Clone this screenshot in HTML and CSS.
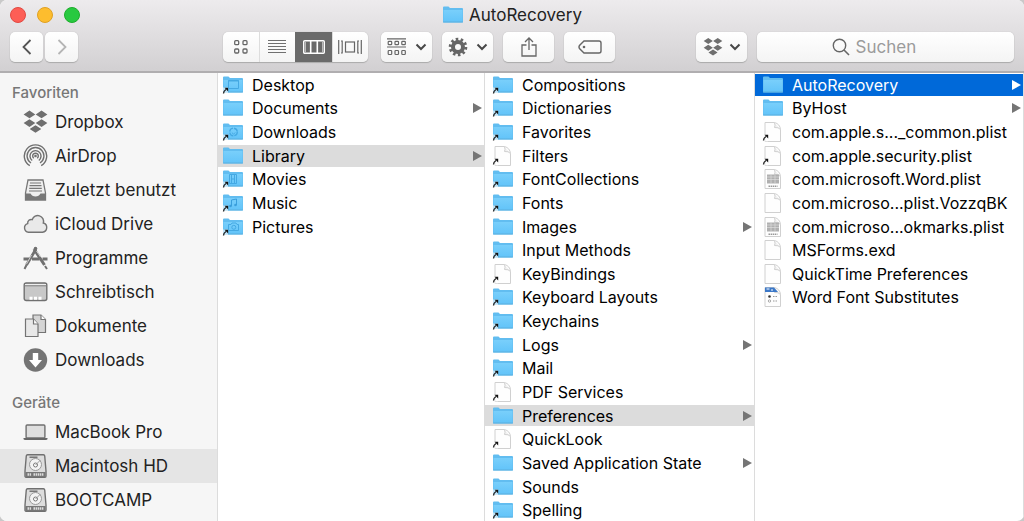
FILE: index.html
```html
<!DOCTYPE html>
<html lang="de">
<head>
<meta charset="utf-8">
<title>AutoRecovery</title>
<link rel="stylesheet" href="styles.css">
</head>
<body>
<svg class="defs" aria-hidden="true">
  <defs>
    <linearGradient id="blue" x1="0" y1="0" x2="0" y2="1"><stop offset="0" stop-color="#79cffb"/><stop offset="1" stop-color="#63c4f9"/></linearGradient>
    <symbol id="folder" viewBox="0 0 22 20"><path d="M1 2.500q0-1 1-1h4.500l1.500 1.500h12q1 0 1 1v12.500q0 1-1 1H2q-1 0-1-1z" fill="#62bdf0"/><path d="M1.500 5h19v11.500h-19z" fill="url(#blue)"/><path d="M1 17h20" stroke="#5cb2e2"/></symbol>
    <symbol id="arrow" viewBox="0 0 22 20"><path d="M0 12.500h6v7H0z" fill="#fff" opacity=".6"/><path d="M1.500 18.500q0-2.500 2.500-4" fill="none" stroke="#222" stroke-width="1.300"/><path d="M2.500 12.800h3.700v3.700z" fill="#111"/></symbol>
    <symbol id="alias" viewBox="0 0 22 20"><use href="#folder"/><use href="#arrow"/></symbol>
    <symbol id="doc" viewBox="0 0 22 20"><path d="M3 .5h9.500q5.500 1.500 6 7v12H3z" fill="#fefefe" stroke="#d0d0d0"/><path d="M12.500.5q1 3 0 5 4-.5 6 2" fill="#f2f2f2" stroke="#d0d0d0"/></symbol>
    <symbol id="docalias" viewBox="0 0 22 20"><use href="#doc"/><use href="#arrow"/></symbol>
    <symbol id="plist" viewBox="0 0 22 20"><use href="#doc"/><path d="M5 5.500h12v9H5z" fill="#b0b0b0"/><path d="M5 8h12M5 10.500h12M9 5.500v9M13 5.500v9" stroke="#dcdcdc" stroke-width=".7"/><path d="M6.500 17.200h9" stroke="#999" stroke-width="1.400" stroke-dasharray="1.500 .6"/></symbol>
    <symbol id="worddoc" viewBox="0 0 22 20"><use href="#doc"/><path d="M3 .5h9l4 4.500H3z" fill="#3b78c8"/><path d="M4.500 2h3M9 3h2" stroke="#fff"/><circle cx="7.500" cy="9.500" r="1.300" fill="#333"/><circle cx="7.500" cy="14" r="1.200" fill="#fff" stroke="#888" stroke-width=".7"/><path d="M11 9.500h4M11 14h4" stroke="#999" stroke-dasharray="1 .5"/></symbol>
    <symbol id="desktopf" viewBox="0 0 22 20"><use href="#alias"/><path d="M6.500 5.500h10v8h-10zM6 6h11" fill="none" stroke="#45a9e3"/></symbol>
    <symbol id="downf" viewBox="0 0 22 20"><use href="#alias"/><circle cx="11.500" cy="10" r="3.800" fill="none" stroke="#45a9e3" stroke-width="1.300" stroke-dasharray="5 1"/><path d="m9.800 10.500 1.700 1.700 1.700-1.700" fill="none" stroke="#45a9e3"/></symbol>
    <symbol id="movief" viewBox="0 0 22 20"><use href="#alias"/><path d="M7.500 5.500h7v9h-7zM9.500 5.500v9M12.500 5.500v9M9.500 10h3" fill="none" stroke="#45a9e3"/></symbol>
    <symbol id="musicf" viewBox="0 0 22 20"><use href="#alias"/><path d="M9.500 13V7l5-1v6" fill="none" stroke="#3a9fdc"/><circle cx="8.500" cy="13" r="1.300" fill="#3a9fdc"/><circle cx="13.500" cy="12" r="1.300" fill="#3a9fdc"/></symbol>
    <symbol id="picf" viewBox="0 0 22 20"><use href="#alias"/><path d="M6.500 7.500h2.500l1-1.500h4l1 1.500h1.500v6h-10z" fill="none" stroke="#45a9e3"/><circle cx="11.800" cy="10.300" r="2" fill="none" stroke="#45a9e3"/></symbol>
    <symbol id="dropbox" viewBox="0 0 24 22"><path d="M6.200 0l5.600 3.700-5.600 3.700L.6 3.700zM17.800 0l5.600 3.700-5.600 3.700-5.600-3.700zM6.200 8.300l5.600 3.700-5.600 3.700L.6 12zM17.800 8.300l5.600 3.700-5.600 3.700-5.600-3.700zM12 14l5.600 3.700L12 21.400l-5.600-3.700z" fill="#6f6f6f"/></symbol>
    <symbol id="airdrop" viewBox="0 0 24 24"><g fill="none" stroke="#707070" stroke-width="1.400"><path d="M6.300 21.700a11.200 11.200 0 1 1 11.400 0M7.500 19a8.400 8.400 0 1 1 9 0M8.700 16.500a5.500 5.500 0 1 1 6.600 0M10.300 14.200a2.800 2.800 0 1 1 3.400 0"/></g><circle cx="12" cy="12" r="1.300" fill="#707070"/></symbol>
    <symbol id="recent" viewBox="0 0 24 24"><path d="M4.500 2h15l2.500 13v7H2v-7z" fill="#eee" stroke="#777" stroke-width="1.300"/><path d="M2 15.500h5q1.500 3 5 3t5-3h5V22H2z" fill="#777"/><path d="M6.500 5h11M6 7.700h12M5.700 10.300h12.600M5.500 13h13" stroke="#777" stroke-width="1.200"/></symbol>
    <symbol id="cloud" viewBox="0 0 24 24"><path d="M5 20.200a4.400 4.400 0 0 1-.8-8.600 3.600 3.600 0 0 1 4.600-4 5.700 5.700 0 0 1 11 3.400 4.700 4.700 0 0 1-.8 9.200z" fill="#e9e9e9" stroke="#747474" stroke-width="1.400"/></symbol>
    <symbol id="apps" viewBox="0 0 24 24"><g stroke="#707070"><path d="M10.500 3 21 19" stroke-width="3"/><path d="M12.500 3 3 19" stroke-width="2.800"/><path d="m3 19-2 4M21.500 20l2 3" stroke-width="2"/><path d="M0 13h5.500M8.500 13h7.500M19 13h5" stroke-width="3"/></g><circle cx="12" cy="2.500" r="1.800" fill="#707070"/><path d="m8 9-5 9M13 5l4 6" stroke="#f6f6f6" stroke-width=".7"/></symbol>
    <symbol id="desk" viewBox="0 0 24 24"><rect x=".7" y="3" width="22.600" height="17.500" rx="2" fill="#c8c8c8" stroke="#707070" stroke-width="1.400"/><path d="M1.500 4.500h21" stroke="#eee"/><path d="M1 5.800h22" stroke="#808080"/><path d="M6 18.300h3M10.500 18.300h3M15 18.300h3" stroke="#fff" stroke-width="3"/></symbol>
    <symbol id="docs" viewBox="0 0 24 24"><g stroke="#747474" stroke-width="1.200"><path d="M9.500 1h8l4.500 4.500v13H9.500z" fill="#d5d5d5"/><path d="M17.500 1v4.500H22" fill="#fff"/><path d="M2 5h8l4.500 5v12.500H2z" fill="#e8e8e8"/><path d="M10 5v5h4.500" fill="#fff"/></g></symbol>
    <symbol id="down" viewBox="0 0 24 24"><circle cx="12" cy="12" r="11.700" fill="#747474"/><path d="M9.300 5h5.400v7h3.800L12 19.500 5.500 12h3.800z" fill="#fff"/></symbol>
    <symbol id="laptop" viewBox="0 0 24 24"><rect x="2.600" y="5" width="18.800" height="13" rx="1" fill="#dedede" stroke="#707070" stroke-width="1.400"/><path d="M0 18h24v1q0 1-2 1H2q-2 0-2-1z" fill="#666"/></symbol>
    <symbol id="disk" viewBox="0 0 24 24"><path d="M4 .8h16q1 0 1.200 1L22.500 17v5q0 1.200-1 1.200h-19q-1 0-1-1.200v-5L2.800 1.800q.2-1 1.200-1z" fill="#ddd" stroke="#707070" stroke-width="1.400"/><path d="M2 18h20v5H2z" fill="#777"/><path d="M4 20.500h4M10 20.500h10" stroke="#ddd" stroke-width="2.500" stroke-dasharray="1.500 .6"/><circle cx="12" cy="10.500" r="6" fill="#f3f3f3" stroke="#999"/><circle cx="12" cy="11" r="2" fill="#fff" stroke="#777"/><path d="M6 3.200h8" stroke="#666" stroke-width="1.300"/><path d="m12 11 5-5" stroke="#999"/></symbol>
    <symbol id="chev" viewBox="0 0 12 8"><path d="m1.500 1.500 4.500 4.500 4.500-4.500" fill="none" stroke="#484848" stroke-width="2"/></symbol>
  </defs>
</svg>

<div class="window">
  <header class="toolbar">
    <div class="titlebar">
      <div class="lights">
        <button class="light close" aria-label="Schließen"></button>
        <button class="light minimize" aria-label="Minimieren"></button>
        <button class="light maximize" aria-label="Vergrößern"></button>
      </div>
      <h1 class="title"><svg class="file-icon"><use href="#folder"/></svg>AutoRecovery</h1>
    </div>
    <div class="controls">
      <nav class="history">
        <button class="btn step" aria-label="Zurück"><svg width="10" height="16" viewBox="0 0 10 16"><path d="M8.500 1 1.500 8l7 7" fill="none" stroke="#555" stroke-width="1.800"/></svg></button>
        <button class="btn step" aria-label="Vorwärts"><svg width="10" height="16" viewBox="0 0 10 16"><path d="m1.500 1 7 7-7 7" fill="none" stroke="#b5b5b5" stroke-width="1.800"/></svg></button>
      </nav>
      <div class="actions">
        <div class="segments">
          <button class="segment" aria-label="Symbole"><svg width="14" height="14" viewBox="0 0 14 14"><g fill="none" stroke="#666" stroke-width="1.300"><rect x=".7" y=".7" width="4" height="4" rx="1"/><rect x="9" y=".7" width="4" height="4" rx="1"/><rect x=".7" y="9" width="4" height="4" rx="1"/><rect x="9" y="9" width="4" height="4" rx="1"/></g></svg></button>
          <button class="segment" aria-label="Liste"><svg width="18" height="14" viewBox="0 0 18 14"><path d="M0 .5h18M0 3.500h18M0 6.500h18M0 9.500h18M0 12.500h18" stroke="#707070"/></svg></button>
          <button class="segment active" aria-label="Spalten"><svg width="22" height="14" viewBox="0 0 22 14"><rect x=".7" y=".7" width="20.600" height="12.600" rx="1" fill="none" stroke="#fff" stroke-width="1.400"/><path d="M7.700 1v12M14.300 1v12" stroke="#fff" stroke-width="1.600"/><path d="M2.500 2v10M19.500 2v10" stroke="#bbb"/></svg></button>
          <button class="segment" aria-label="Cover Flow"><svg width="24" height="14" viewBox="0 0 24 14"><g fill="none" stroke="#666" stroke-width="1.200"><rect x="7.500" y="2" width="9" height="10"/><path d="M.7 0v14M23.300 0v14M3 1h1.200v12H3M21 1h-1.200v12H21"/></g></svg></button>
        </div>
        <button class="btn menu" aria-label="Gruppieren"><svg width="20" height="18" viewBox="0 0 20 18"><g fill="none" stroke="#666" stroke-width="1.200"><path d="M0 .8h19M0 9h19"/><rect x="1.200" y="3.300" width="3.500" height="3.400" rx=".8"/><rect x="8" y="3.300" width="3.500" height="3.400" rx=".8"/><rect x="14.800" y="3.300" width="3.500" height="3.400" rx=".8"/><rect x="1.200" y="12.500" width="3.500" height="4" rx=".8"/><rect x="8" y="12.500" width="3.500" height="4" rx=".8"/><rect x="14.800" y="12.500" width="3.500" height="4" rx=".8"/></g></svg><svg class="chev"><use href="#chev"/></svg></button>
        <button class="btn menu" aria-label="Aktion"><svg width="20" height="20" viewBox="0 0 20 20"><circle cx="10" cy="10" r="7.800" fill="none" stroke="#666" stroke-width="3" stroke-dasharray="2.500 2.400"/><circle cx="10" cy="10" r="5" fill="none" stroke="#666" stroke-width="4"/></svg><svg class="chev"><use href="#chev"/></svg></button>
        <button class="btn" aria-label="Teilen"><svg width="16" height="20" viewBox="0 0 16 20"><path d="M5.500 8H1v11h14V8h-4.500M8 13V1.200M4 5l4-4 4 4" fill="none" stroke="#666" stroke-width="1.300"/></svg></button>
        <button class="btn" aria-label="Tags"><svg width="24" height="14" viewBox="0 0 24 14"><path d="M6 1h15q2 0 2 2v8q0 2-2 2H6L1.500 8.500q-1-1.500 0-3z" fill="none" stroke="#666" stroke-width="1.400"/><circle cx="6" cy="7" r="1.300" fill="#666"/></svg></button>
      </div>
      <button class="btn menu dropbox" aria-label="Dropbox"><svg width="20" height="18"><use href="#dropbox"/></svg><svg class="chev"><use href="#chev"/></svg></button>
      <label class="search"><svg width="18" height="18" viewBox="0 0 18 18"><circle cx="7.500" cy="7.500" r="6.200" fill="none" stroke="#666" stroke-width="1.400"/><path d="m12 12 5 5" stroke="#666" stroke-width="1.600"/></svg><input type="search" placeholder="Suchen" aria-label="Suchen"></label>
    </div>
  </header>

  <main class="browser">
    <aside class="sidebar">
      <h2 class="heading">Favoriten</h2>
      <ul class="places">
        <li><a class="place" href="#"><svg class="place-icon"><use href="#dropbox"/></svg>Dropbox</a></li>
        <li><a class="place" href="#"><svg class="place-icon"><use href="#airdrop"/></svg>AirDrop</a></li>
        <li><a class="place" href="#"><svg class="place-icon"><use href="#recent"/></svg>Zuletzt benutzt</a></li>
        <li><a class="place" href="#"><svg class="place-icon"><use href="#cloud"/></svg>iCloud Drive</a></li>
        <li><a class="place" href="#"><svg class="place-icon"><use href="#apps"/></svg>Programme</a></li>
        <li><a class="place" href="#"><svg class="place-icon"><use href="#desk"/></svg>Schreibtisch</a></li>
        <li><a class="place" href="#"><svg class="place-icon"><use href="#docs"/></svg>Dokumente</a></li>
        <li><a class="place" href="#"><svg class="place-icon"><use href="#down"/></svg>Downloads</a></li>
      </ul>
      <h2 class="heading">Geräte</h2>
      <ul class="places">
        <li><a class="place" href="#"><svg class="place-icon"><use href="#laptop"/></svg>MacBook Pro</a></li>
        <li><a class="place current" href="#"><svg class="place-icon"><use href="#disk"/></svg>Macintosh HD</a></li>
        <li><a class="place" href="#"><svg class="place-icon"><use href="#disk"/></svg>BOOTCAMP</a></li>
      </ul>
    </aside>

    <ul class="column">
      <li><a class="file" href="#"><svg class="file-icon"><use href="#desktopf"/></svg>Desktop</a></li>
      <li><a class="file parent" href="#"><svg class="file-icon"><use href="#folder"/></svg>Documents</a></li>
      <li><a class="file" href="#"><svg class="file-icon"><use href="#downf"/></svg>Downloads</a></li>
      <li><a class="file parent open" href="#"><svg class="file-icon"><use href="#folder"/></svg>Library</a></li>
      <li><a class="file" href="#"><svg class="file-icon"><use href="#movief"/></svg>Movies</a></li>
      <li><a class="file" href="#"><svg class="file-icon"><use href="#musicf"/></svg>Music</a></li>
      <li><a class="file" href="#"><svg class="file-icon"><use href="#picf"/></svg>Pictures</a></li>
    </ul>

    <ul class="column">
      <li><a class="file" href="#"><svg class="file-icon"><use href="#alias"/></svg>Compositions</a></li>
      <li><a class="file" href="#"><svg class="file-icon"><use href="#alias"/></svg>Dictionaries</a></li>
      <li><a class="file" href="#"><svg class="file-icon"><use href="#alias"/></svg>Favorites</a></li>
      <li><a class="file" href="#"><svg class="file-icon"><use href="#docalias"/></svg>Filters</a></li>
      <li><a class="file" href="#"><svg class="file-icon"><use href="#alias"/></svg>FontCollections</a></li>
      <li><a class="file" href="#"><svg class="file-icon"><use href="#alias"/></svg>Fonts</a></li>
      <li><a class="file parent" href="#"><svg class="file-icon"><use href="#folder"/></svg>Images</a></li>
      <li><a class="file" href="#"><svg class="file-icon"><use href="#alias"/></svg>Input Methods</a></li>
      <li><a class="file" href="#"><svg class="file-icon"><use href="#docalias"/></svg>KeyBindings</a></li>
      <li><a class="file" href="#"><svg class="file-icon"><use href="#alias"/></svg>Keyboard Layouts</a></li>
      <li><a class="file" href="#"><svg class="file-icon"><use href="#alias"/></svg>Keychains</a></li>
      <li><a class="file parent" href="#"><svg class="file-icon"><use href="#folder"/></svg>Logs</a></li>
      <li><a class="file" href="#"><svg class="file-icon"><use href="#alias"/></svg>Mail</a></li>
      <li><a class="file" href="#"><svg class="file-icon"><use href="#docalias"/></svg>PDF Services</a></li>
      <li><a class="file parent open" href="#"><svg class="file-icon"><use href="#folder"/></svg>Preferences</a></li>
      <li><a class="file" href="#"><svg class="file-icon"><use href="#docalias"/></svg>QuickLook</a></li>
      <li><a class="file parent" href="#"><svg class="file-icon"><use href="#folder"/></svg>Saved Application State</a></li>
      <li><a class="file" href="#"><svg class="file-icon"><use href="#alias"/></svg>Sounds</a></li>
      <li><a class="file" href="#"><svg class="file-icon"><use href="#alias"/></svg>Spelling</a></li>
    </ul>

    <ul class="column">
      <li><a class="file parent selected" href="#"><svg class="file-icon"><use href="#folder"/></svg>AutoRecovery</a></li>
      <li><a class="file parent" href="#"><svg class="file-icon"><use href="#folder"/></svg>ByHost</a></li>
      <li><a class="file" href="#"><svg class="file-icon"><use href="#docalias"/></svg>com.apple.s..._common.plist</a></li>
      <li><a class="file" href="#"><svg class="file-icon"><use href="#docalias"/></svg>com.apple.security.plist</a></li>
      <li><a class="file" href="#"><svg class="file-icon"><use href="#plist"/></svg>com.microsoft.Word.plist</a></li>
      <li><a class="file" href="#"><svg class="file-icon"><use href="#doc"/></svg>com.microso...plist.VozzqBK</a></li>
      <li><a class="file" href="#"><svg class="file-icon"><use href="#plist"/></svg>com.microso...okmarks.plist</a></li>
      <li><a class="file" href="#"><svg class="file-icon"><use href="#doc"/></svg>MSForms.exd</a></li>
      <li><a class="file" href="#"><svg class="file-icon"><use href="#doc"/></svg>QuickTime Preferences</a></li>
      <li><a class="file" href="#"><svg class="file-icon"><use href="#worddoc"/></svg>Word Font Substitutes</a></li>
    </ul>
  </main>
</div>
</body>
</html>
```
FILE: styles.css
```css
* { box-sizing: border-box; }
body { margin: 0; background: #c9c9c9; font-family: Inter, "Liberation Sans", sans-serif; font-size: 16px; color: #000; }
ul { list-style: none; margin: 0; padding: 0; }
a { color: inherit; text-decoration: none; }
button { border: 0; padding: 0; font: inherit; }
.defs { position: absolute; width: 0; height: 0; }

.window { display: flex; flex-direction: column; height: 100vh; overflow: hidden; background: #fff; border-radius: 7px; }

.toolbar { flex: none; height: 73px; background: linear-gradient(#edebed, #d2d0d2); border-bottom: 2px solid #b0aeb0; }
.titlebar { display: grid; grid-template-columns: 1fr auto 1fr; align-items: center; height: 30px; padding: 0 10px; }
.lights { display: flex; gap: 11px; }
.light { width: 16px; height: 16px; border-radius: 50%; }
.close { background: #fd5e56; border: 1px solid #e14942; }
.minimize { background: #fdbd2e; border: 1px solid #dfa023; }
.maximize { background: #28c940; border: 1px solid #1dad2c; }
.title { display: flex; align-items: center; gap: 5px; margin: 0; font-size: 17px; line-height: 24px; font-weight: 400; color: #222; }

.controls { display: flex; align-items: center; padding: 2px 10px 0 10px; }
.history { display: flex; gap: 2px; width: 213px; }
.actions { display: flex; flex: 1; gap: 10px; }
.btn, .segments, .search { height: 30px; border-radius: 5px; background: linear-gradient(#fff, #f4f4f4); box-shadow: 0 0 1px #aaa, 0 1px 1px #aaa; }
.btn { display: flex; align-items: center; justify-content: center; gap: 8px; width: 51px; }
.step { width: 33px; }
.segments { display: flex; width: 145px; margin-right: 3px; overflow: hidden; }
.segment { display: flex; flex: 1; align-items: center; justify-content: center; background: none; }
.segment + .segment { border-left: 1px solid #ddd; }
.segment.active { background: #6a6a6a; border-color: #6a6a6a; }
.chev { width: 12px; height: 8px; }
.dropbox { gap: 6px; }
.search { display: flex; align-items: center; justify-content: center; gap: 6px; width: 257px; margin-left: 10px; }
.search input { width: 84px; border: 0; padding: 0; outline: 0; background: none; font: inherit; font-size: 17px; appearance: none; }
.search input::placeholder { color: #9b9b9b; }

.browser { display: grid; grid-template-columns: 218px 267px 270px 1fr; flex: 1; min-height: 0; }
.sidebar { background: #f6f6f6; border-right: 1px solid #dcdcdc; padding-top: 8px; overflow: hidden; }
.heading { margin: 0; padding-left: 12px; font-size: 15px; line-height: 24px; font-weight: 500; color: #777; }
.places + .heading { padding-top: 14px; }
.place { display: flex; align-items: center; gap: 7px; height: 34px; padding-left: 23px; font-size: 17px; color: #222; }
.place.current { background: #e5e5e5; }
.place-icon { width: 25px; height: 24px; flex: none; }

.column { display: grid; grid-template-rows: repeat(19, minmax(0, 1fr)); gap: 2px; padding-top: 1px; border-right: 1px solid #dcdcdc; overflow: hidden; }
.file { display: flex; align-items: center; gap: 8px; height: 100%; padding: 0 2px 0 4px; white-space: nowrap; }
.column + .column .file { padding-left: 7px; }
.file-icon { width: 22px; height: 20px; flex: none; }
.parent::after { content: ""; margin-left: auto; border-left: 9px solid #757575; border-top: 5px solid transparent; border-bottom: 5px solid transparent; }
.open { background: #dcdcdc; }
.selected { background: #0069d9; color: #fff; }
.selected::after { border-left-color: #fff; }
```
